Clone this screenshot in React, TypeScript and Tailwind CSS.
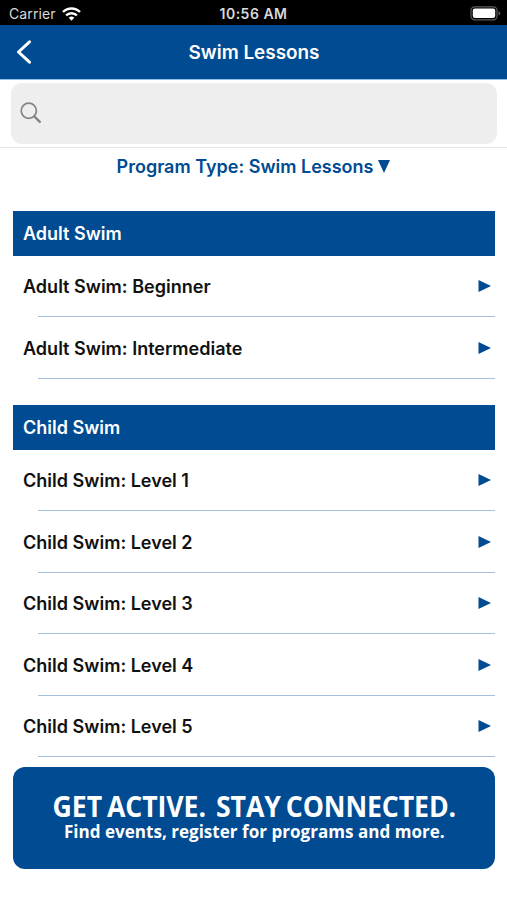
import React from "react";

type Section = {
  title: string;
  items: string[];
};

const sections: Section[] = [
  {
    title: "Adult Swim",
    items: ["Adult Swim: Beginner", "Adult Swim: Intermediate"],
  },
  {
    title: "Child Swim",
    items: [
      "Child Swim: Level 1",
      "Child Swim: Level 2",
      "Child Swim: Level 3",
      "Child Swim: Level 4",
      "Child Swim: Level 5",
    ],
  },
];

const StatusBar = () => (
  <div className="grid h-[25px] grid-cols-3 items-center bg-black pt-[2px] text-[#d9d9d9]">
    <div className="flex items-center gap-[6px] pl-[9px]">
      <span className="text-[14px] leading-none tracking-[0.1px]">Carrier</span>
      <svg width="19" height="14" viewBox="0 0 19 14" fill="none" stroke="#fff" strokeWidth="2.4">
        <path d="M1 5A12 12 0 0 1 18 5" />
        <path d="M4.1 8.4A7.7 7.7 0 0 1 14.9 8.4" />
        <path d="M9.5 13.7 6.7 10.8A4 4 0 0 1 12.3 10.8Z" fill="#fff" stroke="none" />
      </svg>
    </div>
    <span className="text-center text-[14px] leading-none font-semibold tracking-[0.5px]">10:56 AM</span>
    <div className="flex justify-end pr-[6px]">
      <svg width="31" height="15" viewBox="0 0 31 15">
        <rect x="1" y="0.8" width="26" height="13" rx="3.6" fill="none" stroke="#5c5c5c" strokeWidth="1.2" />
        <rect x="2.8" y="2.6" width="22.4" height="9.4" rx="2" fill="#fff" />
        <path d="M28.5 5v4.6q1.8-.7 1.8-2.3T28.5 5Z" fill="#5c5c5c" />
      </svg>
    </div>
  </div>
);

const NavBar = () => (
  <header className="grid h-[54px] grid-cols-[60px_1fr_60px] items-center bg-[#004b91] text-white">
    <button className="pl-[16px]" aria-label="Back">
      <svg width="16" height="24" viewBox="0 0 16 24" fill="none" stroke="#fff" strokeWidth="3">
        <path d="M13.5 1.8 2.5 12l11 10.2" strokeLinecap="round" strokeLinejoin="round" />
      </svg>
    </button>
    <h1 className="pt-[3px] pl-[1px] text-center text-[18.9px] leading-none font-semibold">Swim Lessons</h1>
  </header>
);

const SearchBar = () => (
  <div className="h-[69px] border-t border-b border-t-[#8fc0e8] border-b-[#e6e6e6] pt-[3px] pr-[10px] pl-[11px]">
    <div className="flex h-[61px] items-center rounded-[11px] bg-[#eeeeee] pb-[2px] pl-[9px]">
      <svg width="22" height="22" viewBox="0 0 22 22" fill="none" stroke="#858585">
        <circle cx="8.8" cy="8.8" r="7.6" strokeWidth="1.7" />
        <path d="m14.3 14.3 5.5 5.5" strokeWidth="2.4" strokeLinecap="round" />
      </svg>
    </div>
  </div>
);

const Row = ({ label }: { label: string }) => (
  <li className="flex h-[61.5px] items-center justify-between pr-[4px] pl-[10px]">
    <span className="pt-[2px] text-[18.05px] leading-none font-semibold">{label}</span>
    <svg width="13" height="12" viewBox="0 0 13 12" fill="#004b91">
      <path d="M0.5 0 13 6 0.5 12Z" />
    </svg>
  </li>
);

const Banner = () => (
  <div className="flex h-[102px] flex-col items-center rounded-[12px] bg-[#004b91] pt-[25px] font-['Open_Sans','Noto_Sans',sans-serif] font-bold whitespace-pre text-white">
    <span className="scale-x-[0.92] text-[29px] leading-[28px] tracking-[-0.1px] [word-spacing:-2px]">
      GET ACTIVE.  STAY CONNECTED.
    </span>
    <span className="scale-x-[0.97] text-[17.6px] leading-[22px]">
      Find events, register for programs and more.
    </span>
  </div>
);

const App = () => {
  return (
    <div className="h-[900px] w-[507px] overflow-hidden bg-white font-['Inter',sans-serif] text-[#111]">
      <StatusBar />
      <NavBar />
      <SearchBar />

      {/* Program type selector */}
      <button className="flex h-[36px] w-full items-center justify-center gap-[5px] text-[18px] leading-none font-semibold text-[#004b91]">
        <span className="pt-[2px]">Program Type: Swim Lessons</span>
        <svg width="12" height="13" viewBox="0 0 12 13" fill="#004b91">
          <path d="M0 0h12L6 13Z" />
        </svg>
      </button>

      <main className="flex flex-col gap-[26.5px] pt-[27px] pr-[12px] pl-[13px]">
        {sections.map((section) => (
          <section key={section.title}>
            <h2 className="flex h-[44.5px] items-center bg-[#004b91] pt-[2px] pl-[10px] text-[18px] leading-none font-semibold text-white">
              {section.title}
            </h2>
            <ul>
              {section.items.map((item) => (
                <React.Fragment key={item}>
                  <Row label={item} />
                  <li className="-mt-[1px] ml-[25px] h-[1px] bg-[#a6c1dd]" />
                </React.Fragment>
              ))}
            </ul>
          </section>
        ))}
      </main>

      <div className="pt-[10px] pr-[12px] pl-[13px]">
        <Banner />
      </div>
    </div>
  );
};

export default App;
